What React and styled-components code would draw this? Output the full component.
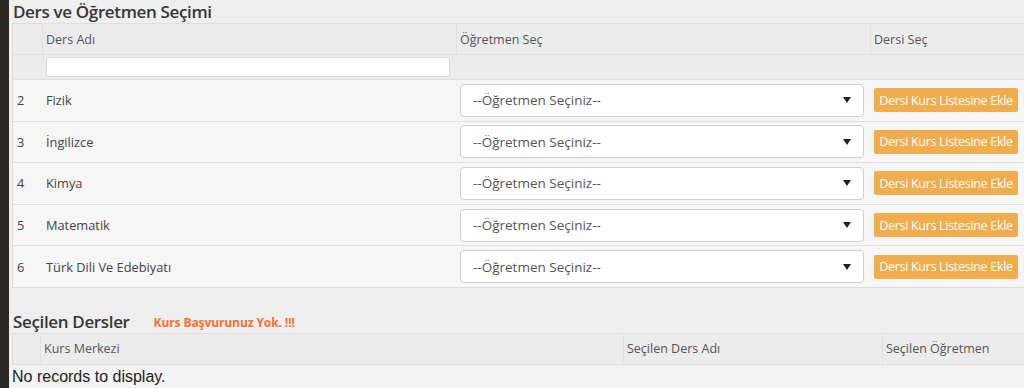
import React from "react";
import styled, { createGlobalStyle } from "styled-components";

const GlobalStyle = createGlobalStyle`
  html, body {
    margin: 0;
    padding: 0;
    background: #efefef;
  }
  body {
    font-family: "Open Sans", "Noto Sans", sans-serif;
    color: #333;
  }
`;

const Page = styled.div`
  display: flex;
  width: 1024px;
  height: 388px;
  overflow: hidden;
`;

const SideStrip = styled.div`
  width: 9px;
  flex-shrink: 0;
  background: #2b2724;
`;

const Content = styled.div`
  flex: 1;
  padding-left: 3px;
  min-width: 0;
`;

const SectionTitle = styled.h2`
  margin: 0;
  height: ${({ h }) => h}px;
  display: flex;
  align-items: ${({ align }) => align || "center"};
  gap: 24px;
  padding-left: 1px;
  font-size: 17px;
  font-weight: 600;
  color: #363636;
  letter-spacing: -0.35px;
`;

const Warning = styled.span`
  font-size: 12px;
  font-weight: 700;
  color: #ff6d2a;
  letter-spacing: -0.1px;
  padding-bottom: 2px;
`;

const Spacer = styled.div`
  height: ${({ h }) => h}px;
`;

const Table = styled.div`
  border: 1px solid #dedede;
  border-right: none;
`;

const Row = styled.div`
  display: grid;
  grid-template-columns: ${({ cols }) => cols};
  height: ${({ h }) => h}px;
  background: ${({ bg }) => bg};
  border-bottom: 1px solid #e0e0e0;
  align-items: center;
  &:last-child {
    border-bottom: none;
  }
`;

const HeadCell = styled.div`
  height: 100%;
  display: flex;
  align-items: center;
  padding-left: 3px;
  font-size: 12.5px;
  color: #555;
  border-left: ${({ first }) => (first ? "none" : "1px solid #e2e2e2")};
  box-sizing: border-box;
`;

const Cell = styled.div`
  display: flex;
  align-items: center;
  padding-left: ${({ pl }) => pl ?? 4}px;
  font-size: 12.8px;
  color: #444;
`;

const FilterInput = styled.input`
  width: 404px;
  height: 20px;
  box-sizing: border-box;
  border: 1px solid #d8d8d8;
  border-radius: 3px;
  background: #fff;
  margin-left: 4px;
  outline: none;
`;

const SelectBox = styled.div`
  width: 404px;
  height: 33px;
  box-sizing: border-box;
  border: 1px solid #cfcfcf;
  border-radius: 4px;
  background: #fff;
  display: flex;
  align-items: center;
  justify-content: space-between;
  padding: 0 12px 0 12px;
  font-size: 13.5px;
  color: #555;
`;

const Caret = styled.span`
  width: 0;
  height: 0;
  border-left: 4px solid transparent;
  border-right: 4px solid transparent;
  border-top: 6px solid #222;
`;

const AddButton = styled.button`
  height: 24px;
  width: 144px;
  padding: 0;
  border: none;
  border-radius: 2px;
  background: #f0ad4e;
  color: #fff;
  font-family: "Open Sans", "Noto Sans", sans-serif;
  font-size: 12.5px;
  letter-spacing: -0.3px;
  white-space: nowrap;
  cursor: pointer;
`;

const EmptyText = styled.div`
  height: 24px;
  display: flex;
  align-items: center;
  background: #f3f3f3;
  font-family: "Liberation Sans", Arial, sans-serif;
  font-size: 16px;
  color: #222;
`;

const lessons = [
  { no: 2, name: "Fizik" },
  { no: 3, name: "İngilizce" },
  { no: 4, name: "Kimya" },
  { no: 5, name: "Matematik" },
  { no: 6, name: "Türk Dili Ve Edebiyatı" },
];

const COLS1 = "29px 414px 414px 1fr";
const COLS2 = "27px 583px 259px 1fr";

export default function App() {
  return (
    <>
      <GlobalStyle />
      <Page>
        <SideStrip />
        <Content>
          <SectionTitle h={23}>Ders ve Öğretmen Seçimi</SectionTitle>
          <Table>
            <Row cols={COLS1} h={30} bg="#ececec">
              <HeadCell first />
              <HeadCell>Ders Adı</HeadCell>
              <HeadCell>Öğretmen Seç</HeadCell>
              <HeadCell>Dersi Seç</HeadCell>
            </Row>
            <Row cols={COLS1} h={24} bg="#ececec">
              <div />
              <FilterInput />
              <div />
              <div />
            </Row>
            {lessons.map((l) => (
              <Row key={l.no} cols={COLS1} h={40.6} bg="#f6f6f6">
                <Cell pl={4}>{l.no}</Cell>
                <Cell pl={4}>{l.name}</Cell>
                <Cell pl={4}>
                  <SelectBox>
                    --Öğretmen Seçiniz--
                    <Caret />
                  </SelectBox>
                </Cell>
                <Cell pl={4}>
                  <AddButton>Dersi Kurs Listesine Ekle</AddButton>
                </Cell>
              </Row>
            ))}
          </Table>
          <Spacer h={19} />
          <SectionTitle h={26} align="flex-end">
            Seçilen Dersler
            <Warning>Kurs Başvurunuz Yok. !!!</Warning>
          </SectionTitle>
          <Table>
            <Row cols={COLS2} h={30} bg="#ececec">
              <HeadCell first />
              <HeadCell>Kurs Merkezi</HeadCell>
              <HeadCell>Seçilen Ders Adı</HeadCell>
              <HeadCell>Seçilen Öğretmen</HeadCell>
            </Row>
          </Table>
          <EmptyText>No records to display.</EmptyText>
        </Content>
      </Page>
    </>
  );
}
